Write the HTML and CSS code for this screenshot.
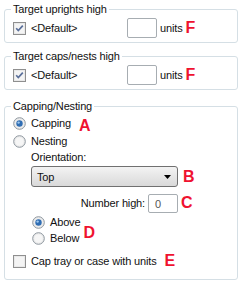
FILE: index.html
```html
<!DOCTYPE html>
<html lang="en">
<head>
    <meta charset="UTF-8">
    <title>Capping options</title>
    <link rel="stylesheet" href="styles.css">
</head>
<body>

    <fieldset class="group">
        <legend>Target uprights high</legend>
        <div class="row">
            <div class="check-label">
                <svg class="box" width="13" height="13" viewBox="0 0 13 13"><rect x="0.5" y="0.5" width="12" height="12" fill="#e9e9e9" stroke="#8f8f8f"/><rect x="2" y="2" width="9" height="9" fill="#f4f4f4"/><path d="M3.2 6.3 L5.3 8.6 L9.8 3.6" fill="none" stroke="#5a6f9a" stroke-width="1.7"/></svg>
                <span>&lt;Default&gt;</span>
            </div>
            <span class="num"></span>
            <span class="units">units</span>
            <span class="tag">F</span>
        </div>
    </fieldset>

    <fieldset class="group">
        <legend>Target caps/nests high</legend>
        <div class="row">
            <div class="check-label">
                <svg class="box" width="13" height="13" viewBox="0 0 13 13"><rect x="0.5" y="0.5" width="12" height="12" fill="#e9e9e9" stroke="#8f8f8f"/><rect x="2" y="2" width="9" height="9" fill="#f4f4f4"/><path d="M3.2 6.3 L5.3 8.6 L9.8 3.6" fill="none" stroke="#5a6f9a" stroke-width="1.7"/></svg>
                <span>&lt;Default&gt;</span>
            </div>
            <span class="num"></span>
            <span class="units">units</span>
            <span class="tag">F</span>
        </div>
    </fieldset>

    <fieldset class="group last">
        <legend>Capping/Nesting</legend>
        <div class="opt">
            <svg class="radio" width="13" height="13" viewBox="0 0 13 13"><circle cx="6.5" cy="6.5" r="5.8" fill="#ececec" stroke="#8d969e"/><circle cx="6.5" cy="6.5" r="3.2" fill="#2f6db3"/><circle cx="5.6" cy="5.6" r="1.2" fill="#9cc7ee"/></svg>
            <span>Capping</span>
            <span class="tag low">A</span>
        </div>
        <div class="opt">
            <svg class="radio" width="13" height="13" viewBox="0 0 13 13"><circle cx="6.5" cy="6.5" r="5.8" fill="#ececec" stroke="#8d969e"/><circle cx="6.5" cy="6.5" r="4" fill="#f6f6f6"/></svg>
            <span>Nesting</span>
        </div>

        <div class="indent">
            <div class="caption">Orientation:</div>
            <div class="select-row">
                <div class="select">
                    <span>Top</span>
                    <svg width="7" height="4" viewBox="0 0 7 4"><path d="M0 0 H7 L3.5 4 Z" fill="#000"/></svg>
                </div>
                <span class="tag">B</span>
            </div>
            <div class="number-row">
                <span>Number high:</span>
                <span class="num small">0</span>
                <span class="tag">C</span>
            </div>
            <div class="sub">
                <div class="radios">
                    <div class="opt">
                        <svg class="radio" width="13" height="13" viewBox="0 0 13 13"><circle cx="6.5" cy="6.5" r="5.8" fill="#ececec" stroke="#8d969e"/><circle cx="6.5" cy="6.5" r="3.2" fill="#2f6db3"/><circle cx="5.6" cy="5.6" r="1.2" fill="#9cc7ee"/></svg>
                        <span>Above</span>
                    </div>
                    <div class="opt">
                        <svg class="radio" width="13" height="13" viewBox="0 0 13 13"><circle cx="6.5" cy="6.5" r="5.8" fill="#ececec" stroke="#8d969e"/><circle cx="6.5" cy="6.5" r="4" fill="#f6f6f6"/></svg>
                        <span>Below</span>
                    </div>
                </div>
                <span class="tag">D</span>
            </div>
        </div>

        <div class="opt cap">
            <svg class="box" width="13" height="13" viewBox="0 0 13 13"><rect x="0.5" y="0.5" width="12" height="12" fill="#e9e9e9" stroke="#8f8f8f"/><rect x="2" y="2" width="9" height="9" fill="#f4f4f4"/></svg>
            <span>Cap tray or case with units</span>
            <span class="tag">E</span>
        </div>
    </fieldset>

</body>
</html>
```

FILE: styles.css
```css
body {
  margin: 0;
  padding: 2px 4px 0 4px;
  background: #fff;
  font-family: "Liberation Sans", Arial, sans-serif;
  font-size: 11px;
  letter-spacing: -0.15px;
  color: #111;
  overflow: hidden;
}

.group {
  margin: 0 0 6px 0;
  padding: 2px 8px 4px 8px;
  border: 1px solid #d5dfe5;
  border-radius: 3px;
  width: 234px;
  box-sizing: border-box;
}

.group.last {
  margin-top: 9px;
  padding-top: 1px;
  padding-bottom: 5px;
}

.group legend {
  padding: 0 2px;
  margin-left: -2px;
  line-height: 14px;
}

.row {
  display: flex;
  align-items: center;
  height: 20px;
}

.check-label {
  display: flex;
  align-items: center;
  gap: 5px;
  width: 114px;
}

.num {
  display: block;
  width: 30px;
  height: 20px;
  box-sizing: border-box;
  border: 1px solid #a7adb2;
  border-radius: 2px;
  background: #fff;
}

.units {
  margin-left: 3px;
}

.tag {
  color: #ef1230;
  font-weight: bold;
  font-size: 16px;
  line-height: 16px;
  letter-spacing: 0;
  margin-left: 3px;
}

.opt {
  display: flex;
  align-items: center;
  height: 18px;
  gap: 5px;
}

.opt .tag.low {
  margin-left: 3px;
  margin-top: 6px;
}

.indent {
  margin-left: 18px;
}

.caption {
  line-height: 14px;
}

.select-row {
  display: flex;
  align-items: center;
  margin-top: 2px;
}

.select-row .tag {
  margin-left: 5px;
}

.select {
  width: 147px;
  height: 21px;
  box-sizing: border-box;
  border: 1px solid #707070;
  border-radius: 3px;
  background: linear-gradient(#f3f3f3, #e6e6e6 50%, #d9d9d9);
  display: flex;
  align-items: center;
  justify-content: space-between;
  padding: 0 6px 0 5px;
}

.number-row {
  display: flex;
  align-items: center;
  margin-top: 6px;
  height: 20px;
}

.number-row span:first-child {
  width: 117px;
  text-align: right;
  padding-right: 3px;
  box-sizing: border-box;
}

.num.small {
  height: 19px;
  padding: 2px 0 0 6px;
  color: #555;
  line-height: 14px;
}

.sub {
  display: flex;
  align-items: center;
  margin-top: 1px;
  margin-left: 1px;
}

.radios .opt {
  height: 16px;
}

.sub .tag {
  margin-left: 3px;
  margin-top: 6px;
}

.opt.cap {
  margin-top: 6px;
  margin-bottom: 4px;
}
```
